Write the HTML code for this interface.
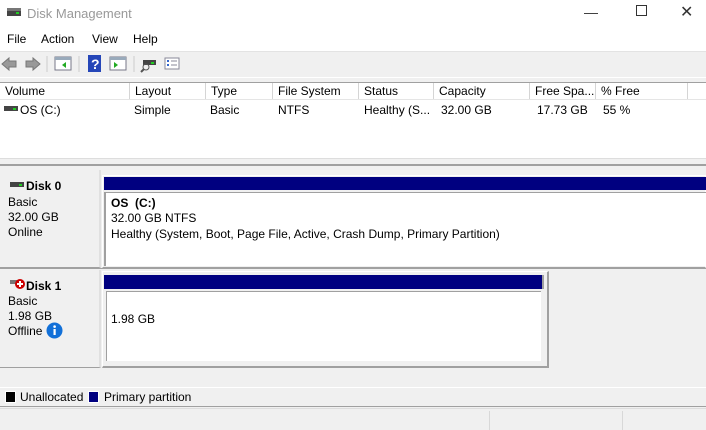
<!DOCTYPE html><html><head><style>
*{margin:0;padding:0;box-sizing:border-box}
body{width:706px;height:430px;background:#f0f0f0;font-family:"Liberation Sans",sans-serif;font-size:12px;color:#000;position:relative;overflow:hidden}
.a{position:absolute;white-space:nowrap}
.hd{position:absolute;top:83px;height:17px;border-right:1px solid #d5d5d5;padding-left:5px;line-height:16px;background:#fff}
.c{position:absolute;top:103px}
</style></head><body>
<div class="a" style="left:0;top:0;width:706px;height:27px;background:#fff"></div>
<svg class="a" style="left:6px;top:6px" width="16" height="14"><rect x="1" y="2" width="14" height="8" fill="#444"/><rect x="1" y="2" width="14" height="3" fill="#777"/><rect x="10" y="6" width="3" height="2" fill="#2c2"/></svg>
<div class="a" style="left:27px;top:6px;color:#999;font-size:13px">Disk Management</div>
<div class="a" style="left:584px;top:4px;color:#333;font-size:14px">—</div>
<div class="a" style="left:636px;top:5px;width:11px;height:11px;border:1px solid #333"></div>
<div class="a" style="left:680px;top:2px;color:#333;font-size:16px">✕</div>
<div class="a" style="left:0;top:27px;width:706px;height:24px;background:#fff"></div>
<div class="a" style="left:7px;top:32px">File</div>
<div class="a" style="left:41px;top:32px">Action</div>
<div class="a" style="left:92px;top:32px">View</div>
<div class="a" style="left:133px;top:32px">Help</div>
<div class="a" style="left:0;top:51px;width:706px;height:1px;background:#e3e3e3"></div>
<svg class="a" style="left:0;top:54px" width="200" height="20">
<path d="M2 10 L9 4 V7 H16 V13 H9 V16 Z" fill="#999" stroke="#777"/>
<path d="M40 10 L33 4 V7 H26 V13 H33 V16 Z" fill="#999" stroke="#777"/>
<line x1="47" y1="2" x2="47" y2="18" stroke="#ccc"/>
<rect x="55" y="3" width="16" height="13" fill="#fff" stroke="#778"/><rect x="55" y="3" width="16" height="3" fill="#9ab"/><path d="M66 8 V14 L62 11Z" fill="#2a2"/>
<line x1="79" y1="2" x2="79" y2="18" stroke="#ccc"/>
<rect x="88" y="1" width="13" height="17" fill="#2546b8"/><text x="91" y="15" fill="#fff" font-size="14" font-family="Liberation Sans" font-weight="bold">?</text>
<rect x="110" y="3" width="16" height="13" fill="#fff" stroke="#778"/><rect x="110" y="3" width="16" height="3" fill="#9ab"/><path d="M114 8 V14 L118 11Z" fill="#2a2"/>
<line x1="134" y1="2" x2="134" y2="18" stroke="#ccc"/>
<rect x="143" y="6" width="13" height="5" fill="#444"/><rect x="151" y="8" width="3" height="2" fill="#2c2"/><circle cx="146" cy="13" r="3" fill="none" stroke="#555"/><line x1="144" y1="15" x2="141" y2="18" stroke="#555" stroke-width="2"/>
<rect x="165" y="4" width="14" height="11" fill="#fff" stroke="#889"/><line x1="171" y1="7" x2="177" y2="7" stroke="#889"/><line x1="171" y1="11" x2="177" y2="11" stroke="#889"/><rect x="167" y="6" width="2" height="2" fill="#36c"/><rect x="167" y="10" width="2" height="2" fill="#36c"/>
</svg>
<div class="a" style="left:0;top:77px;width:706px;height:1px;background:#fff"></div>
<div class="a" style="left:0;top:82px;width:706px;height:77px;background:#fff;border-top:1px solid #a0a0a0"></div>
<div class="hd" style="left:0;width:130px">Volume</div>
<div class="hd" style="left:130px;width:76px">Layout</div>
<div class="hd" style="left:206px;width:67px">Type</div>
<div class="hd" style="left:273px;width:86px">File System</div>
<div class="hd" style="left:359px;width:75px">Status</div>
<div class="hd" style="left:434px;width:96px">Capacity</div>
<div class="hd" style="left:530px;width:66px">Free Spa...</div>
<div class="hd" style="left:596px;width:92px">% Free</div>
<div class="a" style="left:0;top:99px;width:706px;height:1px;background:#e5e5e5"></div>
<svg class="a" style="left:4px;top:106px" width="14" height="6"><rect width="14" height="5" fill="#444"/><rect x="9" y="2" width="3" height="2" fill="#2c2"/></svg>
<div class="c" style="left:20px">OS (C:)</div>
<div class="c" style="left:134px">Simple</div>
<div class="c" style="left:210px">Basic</div>
<div class="c" style="left:278px">NTFS</div>
<div class="c" style="left:364px">Healthy (S...</div>
<div class="c" style="left:441px">32.00 GB</div>
<div class="c" style="left:537px">17.73 GB</div>
<div class="c" style="left:603px">55 %</div>
<div class="a" style="left:0;top:158px;width:706px;height:1px;background:#ddd"></div>
<div class="a" style="left:0;top:164px;width:706px;height:2px;background:#a0a0a0"></div>
<!-- disk 0 -->
<div class="a" style="left:0;top:170px;width:101px;height:98px;border-right:2px solid #e0e0e0;border-bottom:1px solid #a0a0a0"></div>
<svg class="a" style="left:10px;top:182px" width="16" height="6"><rect width="14" height="5" fill="#444"/><rect x="9" y="2" width="3" height="2" fill="#2c2"/></svg>
<div class="a" style="left:26px;top:179px;font-weight:bold">Disk 0</div>
<div class="a" style="left:8px;top:195px;line-height:15px">Basic<br>32.00 GB<br>Online</div>
<div class="a" style="left:102px;top:175px;width:604px;height:93px;border:1px solid #fff;border-bottom:1px solid #a0a0a0"></div>
<div class="a" style="left:104px;top:177px;width:602px;height:13px;background:#000080"></div>
<div class="a" style="left:104px;top:192px;width:602px;height:74px;background:#fff;border-left:2px solid #a0a0a0;border-top:1px solid #a0a0a0"></div>
<div class="a" style="left:111px;top:196px;font-weight:bold">OS&nbsp; (C:)</div>
<div class="a" style="left:111px;top:211px">32.00 GB NTFS</div>
<div class="a" style="left:111px;top:227px">Healthy (System, Boot, Page File, Active, Crash Dump, Primary Partition)</div>
<div class="a" style="left:0;top:268px;width:706px;height:1px;background:#a0a0a0"></div>
<!-- disk 1 -->
<div class="a" style="left:0;top:270px;width:101px;height:98px;border-right:2px solid #e0e0e0;border-bottom:1px solid #a0a0a0"></div>
<svg class="a" style="left:10px;top:278px" width="16" height="12"><rect y="2" width="8" height="4" fill="#777"/><circle cx="10" cy="6" r="5" fill="#c00"/><rect x="9" y="3" width="2" height="6" fill="#fff"/><rect x="7" y="5" width="6" height="2" fill="#fff"/></svg>
<div class="a" style="left:26px;top:279px;font-weight:bold">Disk 1</div>
<div class="a" style="left:8px;top:294px;line-height:15px">Basic<br>1.98 GB<br>Offline</div>
<svg class="a" style="left:46px;top:322px" width="17" height="17"><circle cx="8.5" cy="8.5" r="8" fill="#1270d8"/><rect x="7.5" y="7" width="2.2" height="6" fill="#fff"/><circle cx="8.6" cy="4.6" r="1.3" fill="#fff"/></svg>
<div class="a" style="left:102px;top:271px;width:447px;height:97px;border:1px solid #fff;border-right:2px solid #a0a0a0;border-bottom:2px solid #a0a0a0"></div>
<div class="a" style="left:104px;top:275px;width:440px;height:14px;background:#000080;border-right:2px solid #a0a0a0"></div>
<div class="a" style="left:106px;top:291px;width:435px;height:70px;background:#fff;border-top:1px solid #a0a0a0;border-left:1px solid #a0a0a0"></div>
<div class="a" style="left:111px;top:312px">1.98 GB</div>
<div class="a" style="left:0;top:387px;width:706px;height:1px;background:#fff"></div>
<div class="a" style="left:5px;top:391px;width:11px;height:12px;background:#000;border:1px solid #fff"></div>
<div class="a" style="left:20px;top:390px">Unallocated</div>
<div class="a" style="left:88px;top:391px;width:11px;height:12px;background:#000080;border:1px solid #fff"></div>
<div class="a" style="left:104px;top:390px">Primary partition</div>
<div class="a" style="left:0;top:406px;width:706px;height:1px;background:#a0a0a0"></div>
<div class="a" style="left:0;top:408px;width:706px;height:1px;background:#ddd"></div>
<div class="a" style="left:489px;top:411px;width:1px;height:19px;background:#d8d8d8"></div>
<div class="a" style="left:622px;top:411px;width:1px;height:19px;background:#d8d8d8"></div>
</body></html>
